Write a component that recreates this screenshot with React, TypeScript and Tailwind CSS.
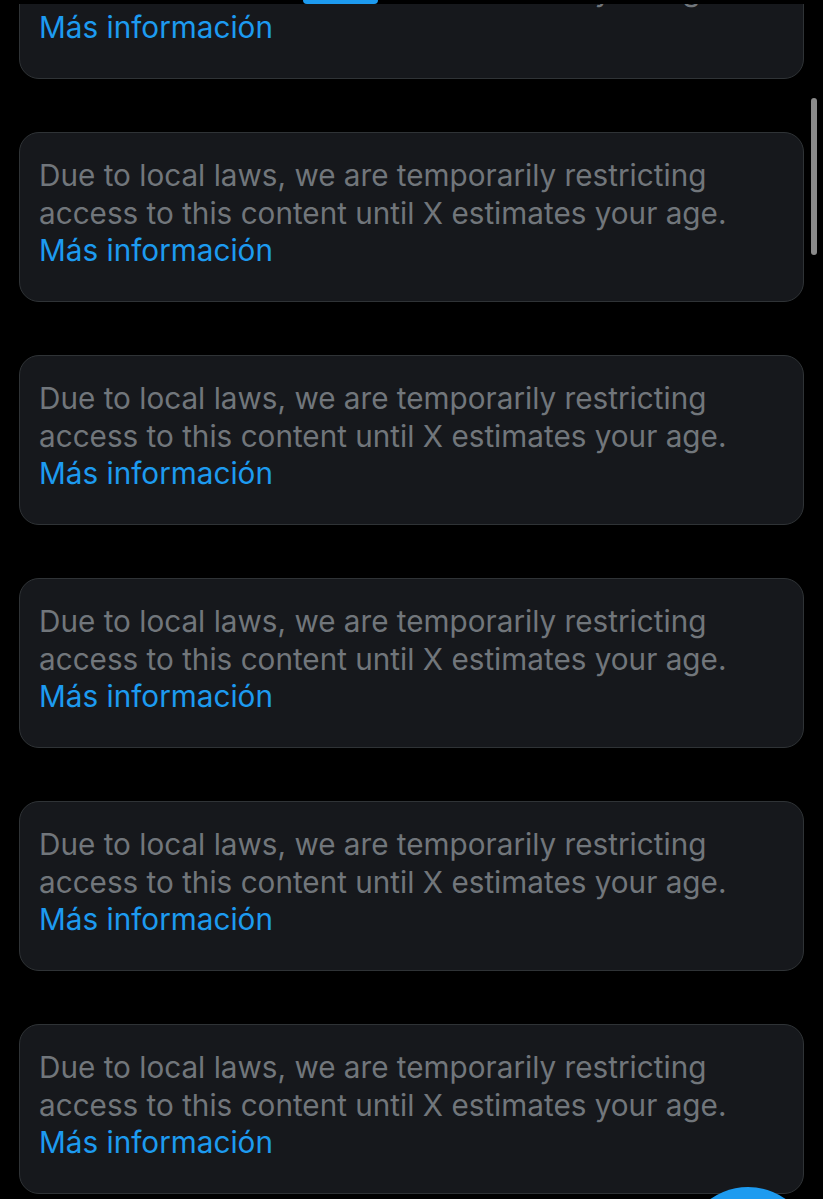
const cards = [0, 1, 2, 3, 4, 5];

function Notice() {
  return (
    <div className="mx-[19px] h-[170px] shrink-0 rounded-[20px] border border-[#2f3336] bg-[#16181c] px-[19px] pt-[24px] text-[29.7px] leading-[37.5px]">
      <p className="text-[#71767b]">
        Due to local laws, we are temporarily restricting
        <br />
        access to this content until X estimates your age.
      </p>
      <a className="text-[#1d9bf0]">Más información</a>
    </div>
  );
}

export default function App() {
  return (
    <main
      className="relative h-[1199px] w-full overflow-hidden bg-black"
      style={{ fontFamily: "Inter, 'Noto Sans', sans-serif" }}
    >
      <div className="mt-[-91px] flex flex-col gap-[53px]">
        {cards.map((i) => (
          <Notice key={i} />
        ))}
      </div>

      {/* header edge with tab indicator */}
      <div className="absolute inset-x-0 top-0 h-[4px] bg-black">
        <div className="ml-[303px] h-[4px] w-[75px] rounded-b-sm bg-[#1d9bf0]" />
      </div>

      {/* scrollbar */}
      <div className="absolute left-[811px] top-[98px] h-[157px] w-[6px] rounded-full bg-[#8a8a8a]" />

      {/* compose button */}
      <div className="absolute left-[683px] top-[1187px] h-[130px] w-[130px] rounded-full bg-[#1d9bf0]" />
    </main>
  );
}
